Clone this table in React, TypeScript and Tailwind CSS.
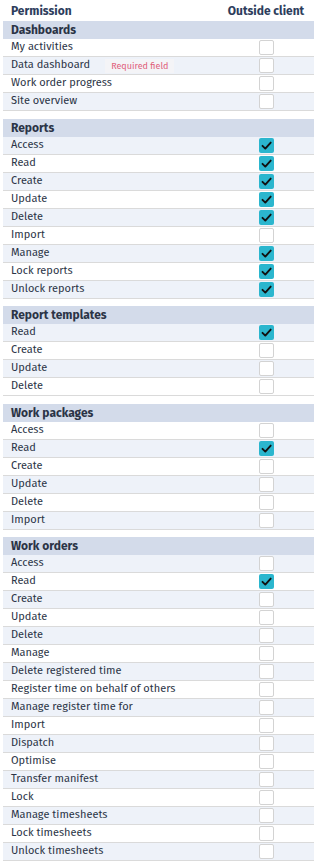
import { Fragment } from "react";

type Perm = { label: string; checked?: boolean; required?: boolean };
type Group = { title: string; perms: Perm[] };

const groups: Group[] = [
  {
    title: "Dashboards",
    perms: [
      { label: "My activities" },
      { label: "Data dashboard", required: true },
      { label: "Work order progress" },
      { label: "Site overview" },
    ],
  },
  {
    title: "Reports",
    perms: [
      { label: "Access", checked: true },
      { label: "Read", checked: true },
      { label: "Create", checked: true },
      { label: "Update", checked: true },
      { label: "Delete", checked: true },
      { label: "Import" },
      { label: "Manage", checked: true },
      { label: "Lock reports", checked: true },
      { label: "Unlock reports", checked: true },
    ],
  },
  {
    title: "Report templates",
    perms: [
      { label: "Read", checked: true },
      { label: "Create" },
      { label: "Update" },
      { label: "Delete" },
    ],
  },
  {
    title: "Work packages",
    perms: [
      { label: "Access" },
      { label: "Read", checked: true },
      { label: "Create" },
      { label: "Update" },
      { label: "Delete" },
      { label: "Import" },
    ],
  },
  {
    title: "Work orders",
    perms: [
      { label: "Access" },
      { label: "Read", checked: true },
      { label: "Create" },
      { label: "Update" },
      { label: "Delete" },
      { label: "Manage" },
      { label: "Delete registered time" },
      { label: "Register time on behalf of others" },
      { label: "Manage register time for" },
      { label: "Import" },
      { label: "Dispatch" },
      { label: "Optimise" },
      { label: "Transfer manifest" },
      { label: "Lock" },
      { label: "Manage timesheets" },
      { label: "Lock timesheets" },
      { label: "Unlock timesheets" },
    ],
  },
];

const Checkbox = ({ checked }: { checked?: boolean }) =>
  checked ? (
    <span className="flex h-[15px] w-[15px] items-center justify-center rounded-[2px] bg-[#2bb6ce]">
      <svg width="13" height="13" viewBox="0 0 13 13" fill="none">
        <path
          d="M2.5 6.8l2.8 2.8 5.4-6"
          stroke="#111"
          strokeWidth="1.9"
          strokeLinecap="round"
          strokeLinejoin="round"
        />
      </svg>
    </span>
  ) : (
    <span className="block h-[15px] w-[15px] rounded-[2px] border border-[#d3d3d3] bg-white" />
  );

export default function App() {
  // striping runs across the whole table, header rows included
  let idx = 0;

  return (
    <div className="min-h-[864px] bg-white pl-[3px] font-['Fira_Sans','Lato',sans-serif] text-[11px] text-[#2b3446]">
      <div className="flex h-[21px] items-center font-bold text-[12px] text-[#2d3d5c]">
        <div className="flex-1 pl-[8px]">Permission</div>
        <div className="w-[96px] text-center">Outside client</div>
      </div>
      {groups.map((g, gi) => {
        idx++;
        return (
          <div key={g.title} className={gi > 0 ? "mt-[7.5px]" : ""}>
            <div className="flex h-[18px] items-center bg-[#d3dbea] pl-[8px] font-bold text-[12px] text-[#2b3446]">
              {g.title}
            </div>
            {g.perms.map((p) => {
              idx++;
              const stripe = idx % 2 === 1;
              return (
                <Fragment key={g.title + p.label}>
                  <div
                    className={`flex h-[18px] items-center border-b border-[#dadada] ${
                      stripe ? "bg-[#eef2f9]" : "bg-white"
                    }`}
                  >
                    <div className="flex flex-1 items-center pl-[8px]">
                      <span>{p.label}</span>
                      {p.required && (
                        <span className="ml-[15px] bg-[#f4f4f7] px-[6px] text-[9px] leading-[14px] text-[#e0607a]">
                          Required field
                        </span>
                      )}
                    </div>
                    <div className="flex w-[96px] justify-center">
                      <Checkbox checked={p.checked} />
                    </div>
                  </div>
                </Fragment>
              );
            })}
          </div>
        );
      })}
    </div>
  );
}
